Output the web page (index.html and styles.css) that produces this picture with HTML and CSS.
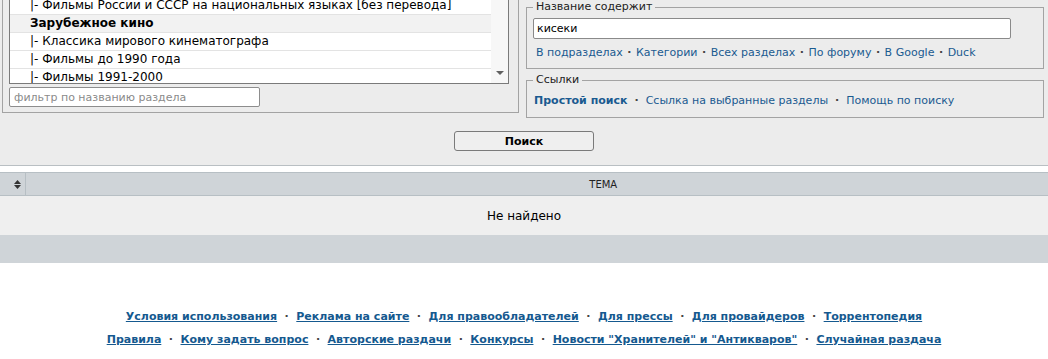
FILE: index.html
```html
<!DOCTYPE html>
<html lang="ru">
<head>
<meta charset="UTF-8">
<title>Поиск</title>
<link rel="stylesheet" href="styles.css">
</head>
<body>

<!-- search form -->
<div class="search-area">
    <div class="search-cols">
        <div class="forum-box">
            <div class="forum-list">
                <div class="forum-rows">
                    <div class="opt">|- Фильмы СССР</div>
                    <div class="opt">|- Фильмы России и СССР на национальных языках [без перевода]</div>
                    <div class="opt grp">Зарубежное кино</div>
                    <div class="opt">|- Классика мирового кинематографа</div>
                    <div class="opt">|- Фильмы до 1990 года</div>
                    <div class="opt">|- Фильмы 1991-2000</div>
                </div>
                <div class="scroll"><span class="scroll-arr"></span></div>
            </div>
            <input class="filter" type="text" placeholder="фильтр по названию раздела">
        </div>

        <div class="opts-col">
            <fieldset class="fs fs-title">
                <legend>Название содержит</legend>
                <input class="title-input" type="text" value="кисеки">
                <div class="links">
                    <a href="#">В подразделах</a><span class="sep">·</span><a href="#">Категории</a><span class="sep">·</span><a href="#">Всех разделах</a><span class="sep">·</span><a href="#">По форуму</a><span class="sep">·</span><a href="#">В Google</a><span class="sep">·</span><a href="#">Duck</a>
                </div>
            </fieldset>
            <fieldset class="fs fs-links">
                <legend>Ссылки</legend>
                <div class="links links-wide">
                    <a href="#" class="bold">Простой поиск</a><span class="sep">·</span><a href="#">Ссылка на выбранные разделы</a><span class="sep">·</span><a href="#">Помощь по поиску</a>
                </div>
            </fieldset>
        </div>
    </div>
    <div class="submit-row">
        <button class="btn" type="button">Поиск</button>
    </div>
</div>

<!-- results -->
<table class="results">
    <tr class="head">
        <th class="col-sort">
            <svg width="7" height="9" viewBox="0 0 7 9"><polygon points="0,4 3.5,0 7,4" fill="#333"/><polygon points="0,5 7,5 3.5,9" fill="#333"/></svg>
        </th>
        <th class="col-topic">ТЕМА</th>
    </tr>
    <tr class="empty">
        <td colspan="2">Не найдено</td>
    </tr>
    <tr class="foot">
        <td colspan="2"></td>
    </tr>
</table>

<div class="footer">
    <div>
        <a href="#">Условия использования</a><span class="sep">·</span><a href="#">Реклама на сайте</a><span class="sep">·</span><a href="#">Для правообладателей</a><span class="sep">·</span><a href="#">Для прессы</a><span class="sep">·</span><a href="#">Для провайдеров</a><span class="sep">·</span><a href="#">Торрентопедия</a>
    </div>
    <div>
        <a href="#">Правила</a><span class="sep">·</span><a href="#">Кому задать вопрос</a><span class="sep">·</span><a href="#">Авторские раздачи</a><span class="sep">·</span><a href="#">Конкурсы</a><span class="sep">·</span><a href="#">Новости "Хранителей" и "Антикваров"</a><span class="sep">·</span><a href="#">Случайная раздача</a>
    </div>
</div>

</body>
</html>
```

FILE: styles.css
```css
body {
    margin: 0;
    background: #fff;
    font-family: "DejaVu Sans", Verdana, sans-serif;
    font-size: 11px;
    color: #000;
}

a {
    color: #1a5a90;
    text-decoration: none;
}

.sep {
    color: #444;
    font-weight: bold;
    margin: 0 7px;
}

/* search form */
.search-area {
    margin-top: -30px; /* page is scrolled down a bit */
    background: #ececec;
    border-bottom: 1px solid #b9bfc3;
    padding-bottom: 14px;
}

.search-cols {
    display: flex;
    align-items: flex-start;
    gap: 7px;
    padding: 0 4px 0 2px;
}

.forum-box {
    width: 517px;
    box-sizing: border-box;
    border: 1px solid #a3a3a3;
    padding: 7px 9px 5px 6px;
}

.forum-list {
    display: flex;
    width: 500px;
    height: 106px;
    box-sizing: border-box;
    border: 1px solid #7a7a7a;
    background: #fff;
    overflow: hidden;
}

.forum-rows {
    flex: 1;
}

.opt {
    height: 17px;
    line-height: 17px;
    border-bottom: 1px solid #e3e3e3;
    padding-left: 20px;
    font-size: 12px;
    white-space: nowrap;
}

.opt.grp {
    background: #f2f2f2;
    font-weight: bold;
}

.scroll {
    width: 17px;
    background: #f7f7f7;
    display: flex;
    align-items: flex-end;
    justify-content: center;
    padding-bottom: 8px;
    box-sizing: border-box;
}

.scroll-arr {
    width: 0;
    height: 0;
    border-left: 4px solid transparent;
    border-right: 4px solid transparent;
    border-top: 4px solid #606060;
}

.filter {
    display: block;
    margin: 3px 0 0 0;
    width: 251px;
    height: 20px;
    box-sizing: border-box;
    border: 1px solid #8d8d8d;
    border-radius: 2px;
    padding: 0 4px;
    font-family: inherit;
    font-size: 11px;
    background: #fff;
}

.filter::placeholder {
    color: #8a8a8a;
}

.opts-col {
    flex: 1;
    margin-top: 30px;
}

.fs {
    margin: 0;
    border: 1px solid #a3a3a3;
    min-width: 0;
}

.fs legend {
    padding: 0 3px;
    line-height: 14px;
    font-size: 11px;
    color: #222;
}

.fs-title {
    padding: 4px 6px 6px 6px;
}

.fs-links {
    margin-top: 4px;
    padding: 5px 6px 7px 6px;
}

.title-input {
    display: block;
    margin: 0;
    width: 478px;
    height: 21px;
    box-sizing: border-box;
    border: 1px solid #8a8a8a;
    border-radius: 2px;
    padding: 0 3px;
    font-family: inherit;
    font-size: 11px;
    background: #fff;
}

.links {
    margin-top: 5px;
    line-height: 18px;
    padding-left: 3px;
    white-space: nowrap;
}

.links .sep {
    margin: 0 4.5px;
}

.links-wide {
    margin-top: 0;
    padding-left: 1px;
}

.links-wide .sep {
    margin: 0 7px;
}

.bold {
    font-weight: bold;
}

.submit-row {
    margin-top: 13px;
    text-align: center;
}

.btn {
    width: 140px;
    height: 20px;
    border: 1px solid #7a7a7a;
    border-radius: 3px;
    background: #efefef;
    font-family: inherit;
    font-size: 11px;
    font-weight: bold;
    color: #000;
    padding: 0;
}

/* results table */
.results {
    width: 100%;
    margin-top: 6px;
    border-collapse: collapse;
}

.results .head th {
    height: 22px;
    padding: 0;
    background: #cfd4d8;
    border-top: 1px solid #b7bfc4;
    border-bottom: 1px solid #b7bfc4;
    font-size: 10px;
    font-weight: normal;
    color: #222;
}

.results .col-sort {
    width: 25px;
    text-align: right;
    padding-right: 5px;
    border-right: 1px solid #b7bfc4;
    box-sizing: border-box;
}

.results .col-sort svg {
    display: block;
    margin-left: auto;
    margin-right: 4px;
}

.results .col-topic {
    text-align: center;
    padding-left: 133px !important;
}

.results .empty td {
    height: 39px;
    padding: 0;
    background: #efefef;
    text-align: center;
    font-size: 12px;
}

.results .foot td {
    height: 28px;
    padding: 0;
    background: #cfd4d8;
}

/* footer */
.footer {
    margin-top: 42px;
    text-align: center;
    line-height: 23px;
    font-weight: bold;
}

.footer a {
    color: #15598f;
    text-decoration: underline;
}

.footer .sep {
    margin: 0 7.5px;
}
```
